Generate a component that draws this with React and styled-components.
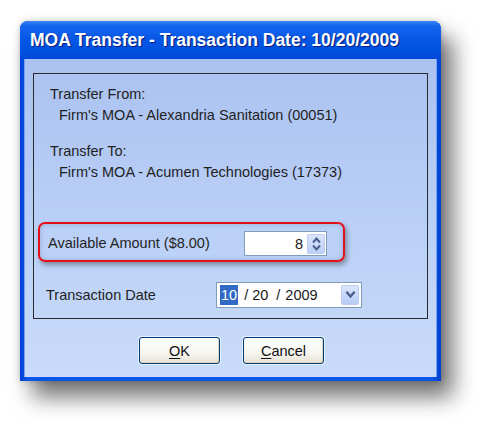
import React from 'react';
import styled, { createGlobalStyle } from 'styled-components';

// --- GLOBAL PAGE ---
const GlobalStyle = createGlobalStyle`
  html, body {
    margin: 0;
    background: #ffffff;
  }
  body {
    min-height: 100vh;
    box-sizing: border-box;
    padding: 21px 0 0 20px;
    font-family: 'Liberation Sans', Arial, sans-serif;
  }
`;

// --- WINDOW FRAME ---
const Window = styled.div`
  width: 421px;
  height: 360px;
  box-sizing: border-box;
  display: flex;
  flex-direction: column;
  background: linear-gradient(90deg, #0042d6, #0a56e6 2%, #0a56e6 98%, #0040d0);
  border-radius: 8px 8px 0 0;
  box-shadow: 0 0 6px rgba(0, 0, 0, 0.22), 12px 16px 22px rgba(0, 0, 0, 0.55);
`;

const TitleBar = styled.div`
  height: 38px;
  flex: none;
  display: flex;
  align-items: center;
  padding-left: 10px;
  border-radius: 8px 8px 0 0;
  background: linear-gradient(
    180deg,
    #3b86f5 0%,
    #1566ee 12%,
    #0858e6 45%,
    #0052e0 75%,
    #0048d8 100%
  );
  color: #ffffff;
  font-size: 17.5px;
  font-weight: 700;
  text-shadow: 1px 1px 1px #0a1a80;
  white-space: nowrap;
`;

const Client = styled.div`
  flex: 1;
  margin: 0 4px 4px;
  padding: 14px 9px 13px;
  display: flex;
  flex-direction: column;
  background: linear-gradient(180deg, #abc2f1 0%, #b9cff6 50%, #c9dbf9 100%);
  box-shadow: inset 1px 0 0 #7aa0f0, inset -1px 0 0 #7aa0f0;
`;

// --- GROUP BOX ---
const GroupBox = styled.div`
  border: 1px solid #2a2a2a;
  padding: 10px 2px 10px;
  display: flex;
  flex-direction: column;
  color: #1f1f1f;
  font-size: 14.5px;
`;

const Caption = styled.div`
  line-height: 21px;
  margin: ${(p) => (p.$gap ? '15px 0 0 14px' : '0 0 0 14px')};
`;

const SubLine = styled.div`
  line-height: 21px;
  margin-left: 23px;
`;

// the red annotation around the amount row
const Highlight = styled.div`
  margin: 39px 0 0 2px;
  width: 307px;
  height: 40px;
  box-sizing: border-box;
  padding: 7px 16px 4px 8px;
  display: grid;
  grid-template-columns: 196px 83px;
  align-items: center;
  border: 2px solid #e3101c;
  border-radius: 7px;
  box-shadow: 2px 3px 5px rgba(0, 0, 0, 0.35), inset 0 0 5px rgba(40, 60, 120, 0.25);
`;

const DateRow = styled.div`
  margin: 20px 0 0 10px;
  display: grid;
  grid-template-columns: 170px 146px;
  align-items: center;
`;

const FieldLabel = styled.span`
  line-height: 21px;
`;

// --- INPUTS ---
const Field = styled.div`
  box-sizing: border-box;
  height: ${(p) => p.$h}px;
  background: #ffffff;
  border: 1px solid #7f9db9;
  display: flex;
  align-items: center;
  font-size: 14.5px;
  color: #1a1a1a;
`;

const AmountValue = styled.span`
  margin-left: auto;
  margin-right: 4px;
`;

const Spinner = styled.div`
  width: 18px;
  height: 20px;
  margin-right: 1px;
  box-sizing: border-box;
  display: flex;
  flex-direction: column;
  align-items: center;
  justify-content: center;
  border: 1px solid #bccbf1;
  border-radius: 2px;
  background: linear-gradient(180deg, #dbe5fc, #bccff7);
`;

const DropButton = styled.div`
  width: 18px;
  height: 20px;
  margin: 0 2px 0 auto;
  box-sizing: border-box;
  display: flex;
  align-items: center;
  justify-content: center;
  border: 1px solid #bccbf1;
  border-radius: 2px;
  background: linear-gradient(180deg, #dbe5fc, #b8ccf7);
`;

const Selected = styled.span`
  margin-left: 3px;
  padding: 0 1px;
  height: 20px;
  line-height: 20px;
  background: #316ac5;
  color: #ffffff;
`;

const Sep = styled.span`
  margin: ${(p) => p.$m};
`;

// --- BUTTONS ---
const ButtonRow = styled.div`
  margin-top: 18px;
  display: flex;
  justify-content: center;
  gap: 23px;
  padding-left: 2px;
`;

const Button = styled.button`
  width: 81px;
  height: 27px;
  padding: 0;
  border: 1px solid #003c74;
  border-radius: 3px;
  background: linear-gradient(180deg, #ffffff 0%, #f6f5f0 60%, #e6e2d8 100%);
  box-shadow: inset -1px -1px 0 #d8d2bd, 0 0 0 1px rgba(255, 255, 255, 0.6);
  font-family: 'Liberation Sans', Arial, sans-serif;
  font-size: 14.5px;
  color: #111111;

  u {
    text-decoration-thickness: 1px;
    text-underline-offset: 2px;
  }
`;

const ChevronUp = () => (
  <svg width="11" height="8" viewBox="0 0 11 8">
    <path d="M2 6.5 L5.5 2.5 L9 6.5" fill="none" stroke="#4a5d8c" strokeWidth="2" />
  </svg>
);

const ChevronDown = ({ size = 11 }) => (
  <svg width={size} height={size * 0.72} viewBox="0 0 11 8">
    <path d="M2 1.5 L5.5 5.5 L9 1.5" fill="none" stroke="#4a5d8c" strokeWidth="2" />
  </svg>
);

const App = () => (
  <>
    <GlobalStyle />
    <Window>
      <TitleBar>MOA Transfer - Transaction Date: 10/20/2009</TitleBar>
      <Client>
        <GroupBox>
          <Caption>Transfer From:</Caption>
          <SubLine>Firm's MOA - Alexandria Sanitation (00051)</SubLine>
          <Caption $gap>Transfer To:</Caption>
          <SubLine>Firm's MOA - Acumen Technologies (17373)</SubLine>

          <Highlight>
            <FieldLabel>Available Amount ($8.00)</FieldLabel>
            <Field $h={25}>
              <AmountValue>8</AmountValue>
              <Spinner>
                <ChevronUp />
                <ChevronDown />
              </Spinner>
            </Field>
          </Highlight>

          <DateRow>
            <FieldLabel>Transaction Date</FieldLabel>
            <Field $h={26}>
              <Selected>10</Selected>
              <Sep $m="0 4px 0 6px">/</Sep>
              <span>20</span>
              <Sep $m="0 5px 0 8px">/</Sep>
              <span>2009</span>
              <DropButton>
                <ChevronDown size={13} />
              </DropButton>
            </Field>
          </DateRow>
        </GroupBox>

        <ButtonRow>
          <Button><u>O</u>K</Button>
          <Button><u>C</u>ancel</Button>
        </ButtonRow>
      </Client>
    </Window>
  </>
);

export default App;
